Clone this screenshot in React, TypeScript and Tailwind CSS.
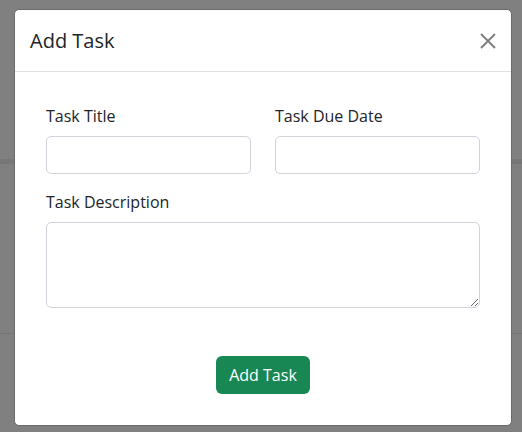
import React from "react";

export default function App() {
  return (
    <div
      className="relative h-[432px] w-[522px] overflow-hidden bg-[#808080]"
      style={{ fontFamily: '"Open Sans", "Noto Sans", sans-serif' }}
    >
      {/* dimmed page behind */}
      <div className="flex flex-col">
        <div className="h-[159px]" />
        <div className="h-[5px] bg-[#777777]" />
        <div className="h-[169px]" />
        <div className="h-[1px] bg-[#747474]" />
      </div>

      {/* modal */}
      <div className="absolute left-[14px] top-[9px] flex w-[498px] flex-col rounded-[5px] border border-[#6a6a6a] bg-white">
        <div className="flex h-[62px] items-center justify-between border-b border-[#dee2e6] px-[15px]">
          <h5 className="text-[20px] leading-[30px] text-[#212529]">Add Task</h5>
          <button className="flex h-4 w-4 items-center justify-center">
            <svg width="16" height="16" viewBox="0 0 16 16" fill="none">
              <path d="M1 1L15 15M15 1L1 15" stroke="#808080" strokeWidth="2" />
            </svg>
          </button>
        </div>
        <div className="flex flex-col px-[31px] pb-[31px] pt-[32px]">
          <div className="grid grid-cols-2 gap-x-[24px]">
            <div className="flex flex-col">
              <label className="mb-2 text-[16px] leading-6 text-[#212529]">Task Title</label>
              <input className="h-[38px] rounded-[5px] border border-[#ced4da] bg-white px-3 outline-none" />
            </div>
            <div className="flex flex-col">
              <label className="mb-2 text-[16px] leading-6 text-[#212529]">Task Due Date</label>
              <input className="h-[38px] rounded-[5px] border border-[#ced4da] bg-white px-3 outline-none" />
            </div>
          </div>
          <label className="mb-2 mt-4 text-[16px] leading-6 text-[#212529]">Task Description</label>
          <textarea className="h-[86px] rounded-[5px] border border-[#ced4da] bg-white px-3 py-1.5 outline-none" />
          <div className="mt-[48px] flex justify-center">
            <button className="h-[38px] w-[94px] rounded-[6px] bg-[#198754] text-[16px] leading-6 text-white">
              Add Task
            </button>
          </div>
        </div>
      </div>
    </div>
  );
}
